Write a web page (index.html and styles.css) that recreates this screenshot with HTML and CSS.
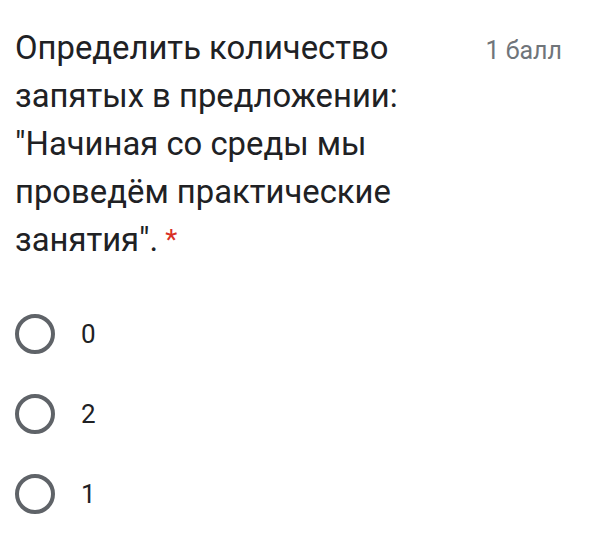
FILE: index.html
```html
<!DOCTYPE html>
<html lang="ru">
<head>
<meta charset="utf-8">
<link rel="stylesheet" href="styles.css">
</head>
<body>
<div class="card">
  <div class="header">
    <div class="title">Определить количество запятых в предложении: "Начиная со среды мы проведём практические занятия".<span class="req">*</span></div>
    <div class="points">1 балл</div>
  </div>
  <div class="options">
    <div class="option"><span class="radio"></span><span class="label">0</span></div>
    <div class="option"><span class="radio"></span><span class="label">2</span></div>
    <div class="option"><span class="radio"></span><span class="label">1</span></div>
  </div>
</div>
</body>
</html>
```
FILE: styles.css
```css
html, body {
  margin: 0;
  padding: 0;
  background: #ffffff;
}
body {
  font-family: Roboto, "Noto Sans", sans-serif;
  color: #202124;
}
.card {
  padding: 24px 20px 0 15px;
}
.header {
  display: flex;
  justify-content: space-between;
  align-items: flex-start;
}
.title {
  width: 400px;
  font-size: 32.8px;
  line-height: 48px;
  color: #202124;
}
.req {
  display: inline-block;
  color: #d93025;
  font-size: 28px;
  line-height: 28px;
  margin-left: 7px;
  vertical-align: 2px;
}
.points {
  font-size: 25px;
  line-height: 54px;
  color: #70757a;
  padding-right: 17px;
}
.options {
  margin-top: 50px;
  display: flex;
  flex-direction: column;
  gap: 40px;
}
.option {
  display: flex;
  align-items: center;
  height: 40px;
}
.radio {
  width: 32px;
  height: 32px;
  border: 4px solid #5f6368;
  border-radius: 50%;
  flex: none;
}
.label {
  margin-left: 26px;
  font-size: 26px;
  color: #202124;
}
```
